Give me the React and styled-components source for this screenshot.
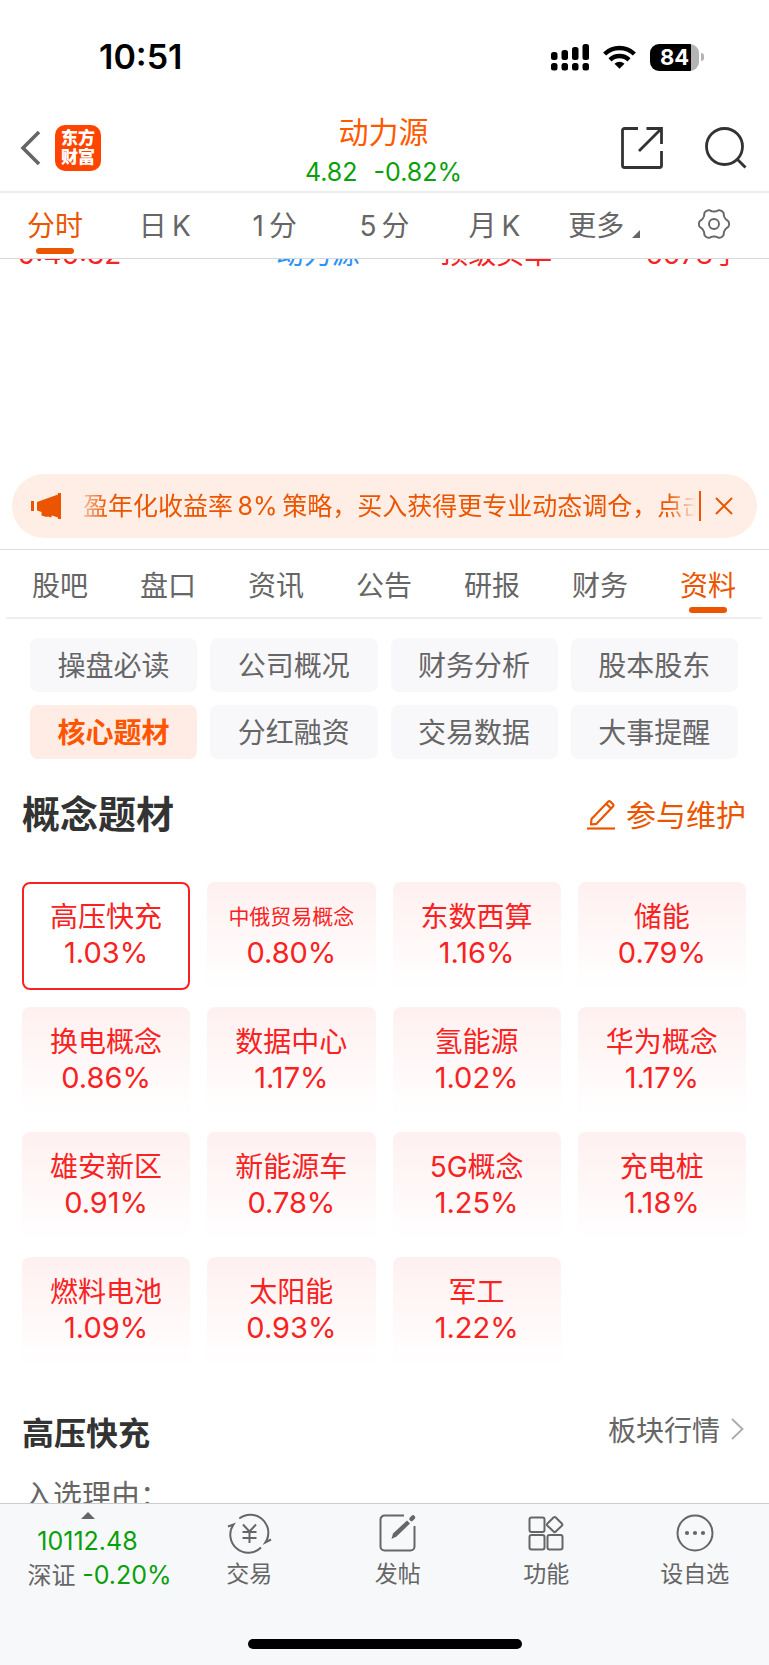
import React from "react";
import styled, { createGlobalStyle } from "styled-components";

const GlobalStyle = createGlobalStyle`
  * {
    box-sizing: border-box;
  }
  body {
    margin: 0;
    background: #fff;
    color: #666;
    font-family: Inter, "Noto Sans CJK SC", sans-serif;
  }
  button {
    border: 0;
    padding: 0;
    background: none;
    color: inherit;
    font: inherit;
    white-space: nowrap;
    cursor: pointer;
  }
  a {
    color: inherit;
    text-decoration: none;
  }
  svg {
    display: block;
    flex: none;
    overflow: visible;
  }
`

const Page = styled.div`
    display: flex;
    flex-direction: column;
    min-height: 100vh;
    overflow: hidden;
  `
const StatusBar = styled.div`
    display: flex;
    align-items: center;
    justify-content: space-between;
    height: 104px;
    padding: 10px 65px 0 99px;
    color: #000;
  `
const Clock = styled.div`
    font-size: 34px;
    font-weight: 600;
    line-height: 40px;
  `
const StatusIcons = styled.div`
    display: flex;
    align-items: center;
    gap: 14px;
  `
const Battery = styled.div`
    display: flex;
    align-items: center;
    gap: 2px;
    &:after{
      content: "";
      width: 3px;
      height: 8px;
      border-radius: 0 4px 4px 0;
      background: #b3b3b3;
    }
  `
const BatteryLevel = styled.div`
    width: 49px;
    height: 27px;
    border-radius: 9px;
    background: linear-gradient(to right, #000 84%, #b3b3b3 84%);
    color: #fff;
    font-size: 22px;
    font-weight: 700;
    line-height: 27px;
    text-align: center;
  `
const Header = styled.header`
    display: grid;
    grid-template-columns: 1fr auto 1fr;
    align-items: center;
    height: 89px;
    padding: 0 22px 0 20px;
    border-bottom: 2px solid #eee;
  `
const HeaderSide = styled.div`
    display: flex;
    align-items: center;
    justify-content: ${props => props.$end ? "flex-end" : "flex-start"};
    gap: ${props => props.$end ? "42px" : "14px"};
  `
const Logo = styled.a`
    width: 46px;
    height: 46px;
    padding: 4px 0;
    border-radius: 10px;
    background: #ff4400;
    color: #fff;
    font-size: 17px;
    font-weight: 900;
    line-height: 19px;
    text-align: center;
  `
const Stock = styled.div`
    padding-top: 8px;
    text-align: center;
  `
const StockName = styled.h1`
    margin: 0;
    color: #ff5a00;
    font-size: 30px;
    font-weight: 400;
    line-height: 40px;
  `
const StockPrice = styled.div`
    display: flex;
    justify-content: center;
    gap: 16px;
    color: #0aa00a;
    font-size: 25px;
    line-height: 40px;
  `
const Tabs = styled.nav`
    display: flex;
    height: ${props => props.$inset ? "69px" : "66px"};
    margin: ${props => props.$inset ? "0 7px 0 6px" : "0"};
    border-bottom: ${props => props.$inset ? "2px solid #eee" : "1px solid #d5d8dc"};
  `
const Tab = styled.button`
    position: relative;
    display: flex;
    flex: 1;
    align-items: center;
    justify-content: center;
    gap: 8px;
    padding-bottom: ${props => props.$raised ? "4px" : "0"};
    color: ${props => props.$active ? "#ec5500" : "#666"};
    font-size: 28px;
    &:after{
      ${props => props.$active ? `
      content: "";
      position: absolute;
      bottom: 4px;
      left: calc(50% - 19px);
      width: 38px;
      height: 6px;
      border-radius: 3px;
      background: #ec5500;` : ""}
    }
  `
const Corner = styled.i`
    align-self: flex-end;
    margin-bottom: 16px;
    border: 4px solid #666;
    border-top-color: transparent;
    border-left-color: transparent;
  `
const Deals = styled.div`
    display: grid;
    grid-template-columns: 36fr 23fr 21fr 21fr;
    grid-template-rows: 100%;
    align-items: end;
    height: 8px;
    padding: 0 28px 0 18px;
    overflow: hidden;
    color: #f82222;
    font-size: 28px;
    line-height: 26px;
    white-space: nowrap;
  `
const DealStock = styled.span`
    color: #2d93f5;
  `
const DealVolume = styled.span`
    text-align: right;
  `
const Banner = styled.div`
    display: flex;
    align-items: center;
    height: 64px;
    margin: 207px 12px 11px;
    padding: 0 24px 0 19px;
    border-radius: 32px;
    background: #feeee6;
    color: #ec5500;
  `
const BannerText = styled.p`
    flex: 1;
    margin: 0 0 0 21px;
    overflow: hidden;
    font-size: 25px;
    line-height: 36px;
    white-space: nowrap;
    mask-image: linear-gradient(to right, rgba(0,0,0,0.3), #000 24px, #000 calc(100% - 28px), transparent);
  `
const BannerClose = styled.button`
    margin-left: 3px;
    padding: 6px 0 6px 14px;
    border-left: 2px solid #ec5500;
  `
const Panel = styled.section`
    border-top: 1px solid #ddd;
  `
const Chips = styled.div`
    display: grid;
    grid-template-columns: repeat(4, 1fr);
    gap: 13px;
    padding: 19px 31px 0 30px;
  `
const Chip = styled.button`
    height: 54px;
    padding-bottom: 2px;
    border-radius: 8px;
    background: ${props => props.$active ? "#ffece5" : "#f8f8fb"};
    color: ${props => props.$active ? "#ff5500" : "#666"};
    font-size: 28px;
    font-weight: ${props => props.$active ? 700 : 400};
  `
const SectionHead = styled.div`
    display: flex;
    align-items: center;
    justify-content: space-between;
    padding: ${props => props.$large ? "31px 23px 44px 22px" : "45px 25px 0 22px"};
  `
const Title = styled.h2`
    margin: 0;
    color: #333;
    font-size: ${props => props.$large ? "38px" : "32px"};
    font-weight: 700;
    line-height: 48px;
  `
const HeadLink = styled.a`
    display: flex;
    align-items: center;
    gap: 11px;
    padding: ${props => props.$accent ? "2px 0 0" : "0 0 6px"};
    color: ${props => props.$accent ? "#ec5500" : "#666"};
    font-size: ${props => props.$accent ? "30px" : "28px"};
    line-height: 40px;
  `
const Cards = styled.div`
    display: grid;
    grid-template-columns: repeat(4, 1fr);
    gap: 17px;
    padding: 0 23px 0 22px;
  `
const Card = styled.button`
    display: flex;
    flex-direction: column;
    align-items: center;
    height: 108px;
    padding-top: 15px;
    border: 2px solid ${props => props.$active ? "#f82222" : "transparent"};
    border-radius: 8px;
    background: ${props => props.$active ? "#fff" : "linear-gradient(#fff0f0, #fff) border-box"};
    color: #f82222;
    line-height: 36px;
  `
const CardName = styled.span`
    font-size: ${props => props.$long ? "21px" : "28px"};
  `
const CardValue = styled.span`
    font-size: 29px;
  `
const Reason = styled.p`
    height: 45px;
    margin: 0;
    padding: 18px 24px 0;
    overflow: hidden;
    font-size: 29px;
    line-height: 40px;
  `
const Footer = styled.footer`
    flex: 1;
    border-top: 1px solid #ccc;
    background: #f7f8fa;
  `
const FooterRow = styled.div`
    display: flex;
    height: 136px;
  `
const IndexBox = styled.button`
    display: flex;
    flex-direction: column;
    align-items: center;
    width: 175px;
    padding-top: 8px;
    font-size: 24px;
    line-height: 34px;
  `
const IndexArrow = styled.svg`
    margin-bottom: 5px;
  `
const IndexChange = styled.span`
    padding-left: 24px;
  `
const Down = styled.span`
    color: #0aa00a;
    font-size: 25px;
  `
const FooterItem = styled.button`
    display: flex;
    flex: 1;
    flex-direction: column;
    align-items: center;
    gap: 4px;
    padding-top: 10px;
    font-size: 23px;
    line-height: 36px;
  `
const HomeBar = styled.div`
    width: 274px;
    height: 10px;
    margin: -1px auto 16px;
    border-radius: 5px;
    background: #000;
  `

const periods = ["分时", "日\u2009K", "1\u2009分", "5\u2009分", "月\u2009K", "更多"]
const sections = ["股吧", "盘口", "资讯", "公告", "研报", "财务", "资料"]
const topics = ["操盘必读", "公司概况", "财务分析", "股本股东", "核心题材", "分红融资", "交易数据", "大事提醒"]
const concepts = [
  { name: "高压快充", value: "1.03%" },
  { name: "中俄贸易概念", value: "0.80%" },
  { name: "东数西算", value: "1.16%" },
  { name: "储能", value: "0.79%" },
  { name: "换电概念", value: "0.86%" },
  { name: "数据中心", value: "1.17%" },
  { name: "氢能源", value: "1.02%" },
  { name: "华为概念", value: "1.17%" },
  { name: "雄安新区", value: "0.91%" },
  { name: "新能源车", value: "0.78%" },
  { name: "5G概念", value: "1.25%" },
  { name: "充电桩", value: "1.18%" },
  { name: "燃料电池", value: "1.09%" },
  { name: "太阳能", value: "0.93%" },
  { name: "军工", value: "1.22%" },
]

const SignalIcon = () => (
  <svg width="38" height="28" viewBox="0 0 38 28">
    <rect x="0" y="9" width="6.5" height="8" rx="2.5" />
    <rect x="10.5" y="7" width="6.5" height="10" rx="2.5" />
    <rect x="21" y="4" width="6.5" height="13" rx="2.5" />
    <rect x="31.5" y="1" width="6.5" height="16" rx="2.5" />
    {[0, 10.5, 21, 31.5].map(x => <rect key={x} x={x} y="20" width="6.5" height="7.5" rx="2.5" />)}
  </svg>
)

const WifiIcon = () => (
  <svg width="33" height="24" viewBox="0 0 33 24" fill="none" stroke="#000" strokeWidth="4.4">
    <path d="M1.6 9a21.5 21.5 0 0 1 29.8 0" />
    <path d="M7 14.8a13.7 13.7 0 0 1 19 0" />
    <path d="M11.5 18.8a7.2 7.2 0 0 1 10 0l-5 5z" fill="#000" stroke="none" />
  </svg>
)

const BackIcon = () => (
  <svg width="21" height="36" viewBox="0 0 21 36" fill="none" stroke="#666" strokeWidth="3.6">
    <path d="M19 2 3 18l16 16" />
  </svg>
)

const ShareIcon = () => (
  <svg width="42" height="42" viewBox="0 0 42 42" fill="none" stroke="#333" strokeWidth="2.8">
    <path d="M17 1.5H3.5a2 2 0 0 0-2 2v35a2 2 0 0 0 2 2h35a2 2 0 0 0 2-2V24" />
    <path d="M25.5 1.5h15V17M40.5 1.5 18 24" />
  </svg>
)

const SearchIcon = () => (
  <svg width="42" height="42" viewBox="0 0 42 42" fill="none" stroke="#333" strokeWidth="2.8">
    <circle cx="19.5" cy="19.5" r="18" />
    <path d="m32 32 8.5 8.5" />
  </svg>
)

// six soft lobes round the hub
const gearPoints = Array.from({ length: 120 }, (_, i) => {
  const a = i * Math.PI / 60
  const wave = Math.cos(6 * a)
  const r = 13.8 + 1.3 * Math.sign(wave) * Math.pow(Math.abs(wave), 0.6)
  return `${(16 + r * Math.cos(a)).toFixed(2)},${(16 + r * Math.sin(a)).toFixed(2)}`
}).join(" ")

const GearIcon = () => (
  <svg width="32" height="32" viewBox="0 0 32 32" fill="none" stroke="#666" strokeWidth="1.9">
    <polygon points={gearPoints} strokeLinejoin="round" />
    <circle cx="16" cy="16" r="5" />
  </svg>
)

const HornIcon = () => (
  <svg width="31" height="28" viewBox="0 0 31 28" fill="#ec5500">
    <path d="M0 9h3v10H0zM6 10l21-7.5V1h3v26h-3v-1.5l-6-2-1 2-3-1-1.5.5-5-1.5V20L6 18.5z" />
  </svg>
)

const CloseIcon = () => (
  <svg width="18" height="18" viewBox="0 0 18 18" stroke="#ec5500" strokeWidth="2">
    <path d="m1 1 16 16M17 1 1 17" />
  </svg>
)

const PenIcon = () => (
  <svg width="28" height="30" viewBox="0 0 28 30" fill="none" stroke="#ec5500" strokeWidth="2.2">
    <path d="M0 28.5h28" />
    <path d="m4.500 19-.5 5.5 5.5-.7L26 6.500c.8-.9.8-1.500 0-2.300l-2.500-2.400c-.8-.8-1.600-.8-2.400 0zM19.500 4l4.500 4.500" strokeLinejoin="round" />
  </svg>
)

const ChevronIcon = () => (
  <svg width="13" height="26" viewBox="0 0 13 26" fill="none" stroke="#aaa" strokeWidth="1.8">
    <path d="m1 1 10.500 10L1 21" />
  </svg>
)

const TradeIcon = () => (
  <svg width="45" height="38" viewBox="0 0 45 38" fill="none" stroke="#666" strokeWidth="2">
    <path d="M12.300 4.500A18 18 0 0 1 39.800 26l-1.500 2.500 5.700-3" />
    <path d="M34 33.500A18 18 0 0 1 6.500 10.500L1 12.500" />
    <path d="m16 10.500 6.500 7 6.500-7M15.500 18h14M15.500 24h14M22.500 17.500v11.500" />
  </svg>
)

const PostIcon = () => (
  <svg width="38" height="38" viewBox="0 0 38 38" fill="none" stroke="#666" strokeWidth="2">
    <path d="M25 1.500H5.500a4 4 0 0 0-4 4v27a4 4 0 0 0 4 4h26a4 4 0 0 0 4-4V12" />
    <path d="m12.500 25 1.500-5.500L28 6.500l3 3L17.500 22.500z" fill="#666" stroke="none" />
    <path d="m32.500 5 1.500-1.500" strokeWidth="4.500" strokeLinecap="round" />
  </svg>
)

const GridIcon = () => (
  <svg width="36" height="38" viewBox="0 0 36 38" fill="none" stroke="#666" strokeWidth="2">
    <rect x="1.5" y="3.5" width="15" height="14.5" rx="2" />
    <rect x="1.5" y="21" width="15" height="14.5" rx="2" />
    <rect x="19.5" y="21" width="15" height="14.5" rx="2" />
    <path d="m25.500 3.500-6 6c-.8.800-.8 1.500 0 2.300l6 5.700c.8.800 1.500.8 2.300 0l6-5.700c.8-.8.8-1.500 0-2.300l-6-6c-.8-.8-1.500-.8-2.300 0z" />
  </svg>
)

const MoreIcon = () => (
  <svg width="38" height="38" viewBox="0 0 38 38" fill="#666">
    <circle cx="19" cy="19" r="17.5" fill="none" stroke="#666" strokeWidth="2" />
    <circle cx="11" cy="19" r="2.1" />
    <circle cx="19" cy="19" r="2.1" />
    <circle cx="27" cy="19" r="2.1" />
  </svg>
)

const actions = [
  { label: "交易", icon: <TradeIcon /> },
  { label: "发帖", icon: <PostIcon /> },
  { label: "功能", icon: <GridIcon /> },
  { label: "设自选", icon: <MoreIcon /> },
]

const App = () => {
  return (
    <Page>
      <GlobalStyle />
      <StatusBar>
        <Clock>10:51</Clock>
        <StatusIcons>
          <SignalIcon />
          <WifiIcon />
          <Battery><BatteryLevel>84</BatteryLevel></Battery>
        </StatusIcons>
      </StatusBar>
      <Header>
        <HeaderSide>
          <button aria-label="返回"><BackIcon /></button>
          <Logo href="#home">东方<br />财富</Logo>
        </HeaderSide>
        <Stock>
          <StockName>动力源</StockName>
          <StockPrice><span>4.82</span><span>-0.82%</span></StockPrice>
        </Stock>
        <HeaderSide $end>
          <button aria-label="分享"><ShareIcon /></button>
          <button aria-label="搜索"><SearchIcon /></button>
        </HeaderSide>
      </Header>
      <Tabs>
        {periods.map((item, i) => (
          <Tab key={item} $raised $active={i === 0}>
            {item}
            {item === "更多" && <Corner />}
          </Tab>
        ))}
        <Tab $raised aria-label="设置"><GearIcon /></Tab>
      </Tabs>
      <Deals>
        <span>9:46:32</span>
        <DealStock>动力源</DealStock>
        <span>顶级买单</span>
        <DealVolume>6678手</DealVolume>
      </Deals>
      <Banner>
        <HornIcon />
        <BannerText>盈年化收益率{"\u2009"}8%{"\u2009"}策略，买入获得更专业动态调仓，点击</BannerText>
        <BannerClose aria-label="关闭"><CloseIcon /></BannerClose>
      </Banner>
      <Panel>
        <Tabs $inset>
          {sections.map(item => <Tab key={item} $active={item === "资料"}>{item}</Tab>)}
        </Tabs>
        <Chips>
          {topics.map(item => <Chip key={item} $active={item === "核心题材"}>{item}</Chip>)}
        </Chips>
        <SectionHead $large>
          <Title $large>概念题材</Title>
          <HeadLink $accent href="#edit"><PenIcon />参与维护</HeadLink>
        </SectionHead>
        <Cards>
          {concepts.map((item, i) => (
            <Card key={item.name} $active={i === 0}>
              <CardName $long={item.name.length > 5}>{item.name}</CardName>
              <CardValue>{item.value}</CardValue>
            </Card>
          ))}
        </Cards>
        <SectionHead>
          <Title>高压快充</Title>
          <HeadLink href="#board">板块行情<ChevronIcon /></HeadLink>
        </SectionHead>
        <Reason>入选理由：</Reason>
      </Panel>
      <Footer>
        <FooterRow>
          <IndexBox>
            <IndexArrow width="14" height="7" viewBox="0 0 14 7" fill="#666"><path d="m7 0 7 7H0z" /></IndexArrow>
            <Down>10112.48</Down>
            <IndexChange>深证 <Down>-0.20%</Down></IndexChange>
          </IndexBox>
          {actions.map(item => (
            <FooterItem key={item.label}>
              {item.icon}
              {item.label}
            </FooterItem>
          ))}
        </FooterRow>
        <HomeBar />
      </Footer>
    </Page>
  );
};
export default App;
